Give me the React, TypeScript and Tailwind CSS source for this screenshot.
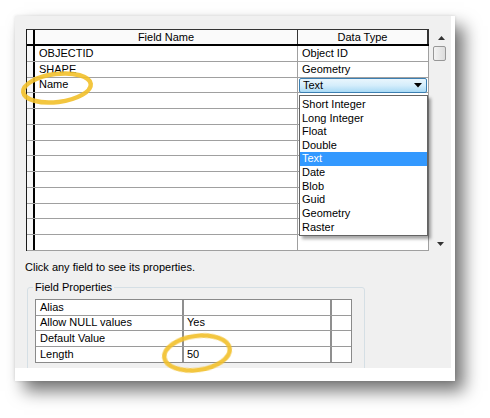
const font = "font-['Liberation_Sans',Arial,sans-serif]";

const fieldRows = [
  { name: "OBJECTID", type: "Object ID" },
  { name: "SHAPE", type: "Geometry" },
  { name: "Name", type: "Text", editing: true },
];

const dataTypes = [
  "Short Integer",
  "Long Integer",
  "Float",
  "Double",
  "Text",
  "Date",
  "Blob",
  "Guid",
  "Geometry",
  "Raster",
];

const properties = [
  { label: "Alias", value: "" },
  { label: "Allow NULL values", value: "Yes" },
  { label: "Default Value", value: "" },
  { label: "Length", value: "50" },
];

function TypeCombo() {
  return (
    <div className="relative h-[15px]">
      <div className="flex h-[15px] items-center justify-between rounded-[2px] border border-[#3c7fb1] bg-gradient-to-b from-[#eaf6fd] via-[#d4edfb] to-[#a9daf5] pl-[3px] pr-[4px]">
        <span>Text</span>
        <svg width="8" height="5" viewBox="0 0 8 5">
          <polygon points="0,0 8,0 4,4.5" fill="#000" />
        </svg>
      </div>
      <ul className="absolute left-0 top-[17px] z-10 h-[141px] w-[129px] border border-[#646464] bg-white pt-[2px] shadow-[3px_3px_3px_rgba(0,0,0,0.35)]">
        {dataTypes.map((t) => (
          <li
            key={t}
            className={`flex h-[13.67px] items-center pl-[2px] ${
              t === "Text" ? "bg-[#3399ff] text-white" : ""
            }`}
          >
            {t}
          </li>
        ))}
      </ul>
    </div>
  );
}

function FieldGrid() {
  const blanks = Array.from({ length: 10 });
  return (
    <div className="flex h-[222px]">
      <div className="flex w-[403px] flex-col border-l border-[#1a1a1a] bg-white">
        <div className="flex h-[17px] shrink-0 border-b-2 border-t border-b-black border-t-[#333] bg-[#fafafa]">
          <div className="w-[8px] border-r-2 border-black" />
          <div className="flex w-[263px] items-center justify-center border-r border-[#333]">
            Field Name
          </div>
          <div className="flex flex-1 items-center justify-center border-r-2 border-[#333]">
            Data Type
          </div>
        </div>
        {fieldRows.map((r) => (
          <div key={r.name} className="flex h-[15.77px] shrink-0 border-b border-[#a0a0a0]">
            <div className="w-[8px] border-r-2 border-black bg-[#f7f7f7]" />
            <div className="flex w-[263px] items-center border-r border-[#a0a0a0] pl-[4px]">
              {r.name}
            </div>
            <div className="flex-1 border-r border-[#a0a0a0]">
              {r.editing ? (
                <div className="px-px">
                  <TypeCombo />
                </div>
              ) : (
                <div className="flex h-full items-center pl-[4px]">{r.type}</div>
              )}
            </div>
          </div>
        ))}
        {blanks.map((_, i) => (
          <div key={i} className="flex h-[15.77px] shrink-0 border-b border-[#a0a0a0]">
            <div className="w-[8px] border-r-2 border-black bg-[#f7f7f7]" />
            <div className="w-[263px] border-r border-[#a0a0a0]" />
            <div className="flex-1 border-r border-[#a0a0a0]" />
          </div>
        ))}
      </div>
      <div className="flex w-[18px] flex-col bg-[#f0f0f0]">
        <div className="flex h-[17px] items-center justify-center pl-[6px]">
          <svg width="7" height="4" viewBox="0 0 7 4">
            <polygon points="0,4 7,4 3.5,0" fill="#333" />
          </svg>
        </div>
        <div className="ml-[4px] h-[15px] w-[13px] rounded-[2px] border border-[#979797] bg-gradient-to-r from-[#f3f3f3] to-[#dcdcdc]" />
        <div className="flex-1" />
        <div className="flex h-[14px] items-center justify-center pl-[4px]">
          <svg width="7" height="4" viewBox="0 0 7 4">
            <polygon points="0,0 7,0 3.5,4" fill="#333" />
          </svg>
        </div>
      </div>
    </div>
  );
}

function FieldProperties() {
  return (
    <fieldset className="ml-px mt-[7px] h-[92px] w-[338px] rounded-[3px] border border-[#d5dfe5]">
      <legend className="ml-[5px] px-[2px]">Field Properties</legend>
      <div className="ml-[7px] mt-[5px] w-[317px] border border-[#8a8a8a] bg-white">
        {properties.map((p, i) => (
          <div
            key={p.label}
            className={`flex h-[15.5px] ${i < properties.length - 1 ? "border-b border-[#9a9a9a]" : ""}`}
          >
            <div className="flex w-[148px] items-center border-r-2 border-[#8f8f8f] pl-[4px]">
              {p.label}
            </div>
            <div className="flex w-[148px] items-center border-r-2 border-[#8f8f8f] pl-[3px]">
              {p.value}
            </div>
            <div className="flex-1" />
          </div>
        ))}
      </div>
    </fieldset>
  );
}

export default function App() {
  return (
    <div className={`relative h-[418px] w-[490px] overflow-hidden bg-white pl-[15px] pt-[16px] text-[11px] leading-[13px] text-black ${font}`}>
      <div className="h-[365px] w-[440px] bg-white shadow-[9px_10px_16px_rgba(0,0,0,0.55),0_0_3px_rgba(0,0,0,0.12)]">
        <div className="h-[352px] w-[436px] overflow-hidden bg-[#f0f0f0] pl-[11px] pt-[13px]">
          <FieldGrid />
          <p className="-ml-px mt-[10px]">Click any field to see its properties.</p>
          <FieldProperties />
        </div>
      </div>
      <svg className="pointer-events-none absolute left-0 top-0" width="490" height="418">
        <defs>
          <filter id="soft" x="-20%" y="-20%" width="140%" height="140%">
            <feGaussianBlur stdDeviation="0.7" />
          </filter>
        </defs>
        <g fill="none" stroke="#f2c02c" strokeWidth="4.5" filter="url(#soft)" opacity="0.9">
          <ellipse cx="57" cy="88" rx="34" ry="14" transform="rotate(-7 57 88)" />
          <ellipse cx="197" cy="353" rx="33" ry="17" transform="rotate(-8 197 353)" />
        </g>
      </svg>
    </div>
  );
}
